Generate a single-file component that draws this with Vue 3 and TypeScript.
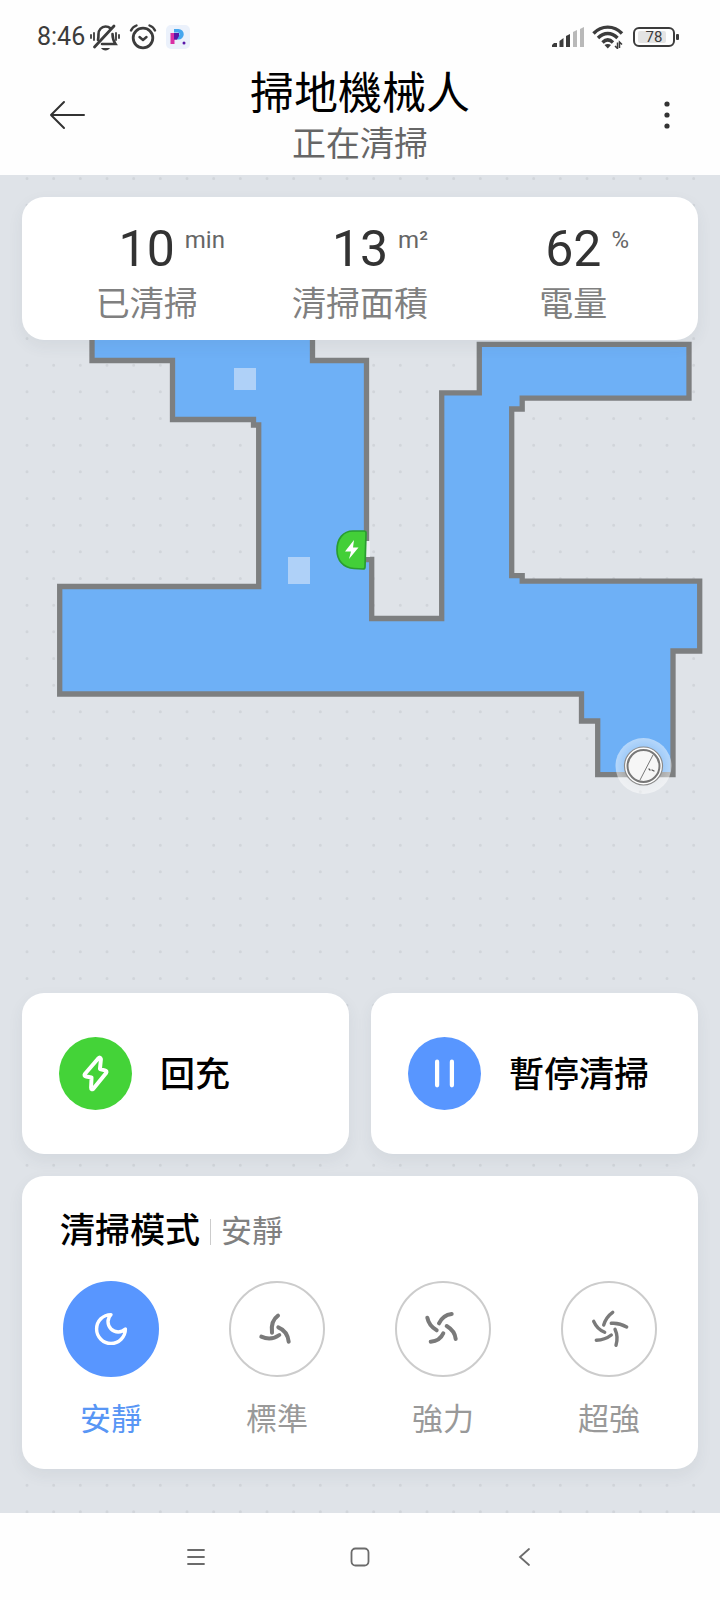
<script setup lang="ts">
import { computed, ref } from 'vue'

interface Stat {
  value: number
  unit: string
  label: string
}

interface Mode {
  id: string
  label: string
  strokes: string[]
  weight: number
}

const stats: Stat[] = [
  { value: 10, unit: 'min', label: '已清掃' },
  { value: 13, unit: 'm²', label: '清掃面積' },
  { value: 62, unit: '%', label: '電量' },
]

const modes: Mode[] = [
  {
    id: 'quiet',
    label: '安靜',
    strokes: ['M0 -14.4 A9.6 9.6 0 0 0 14.4 0 A14.4 14.4 0 1 1 0 -14.4 Z'],
    weight: 3.4,
  },
  {
    id: 'standard',
    label: '標準',
    strokes: ['M1 -13.3 Q-6.5 -8 -5 3.7', 'M1.3 -1.7 Q10.5 2 11.7 12.7', 'M-15.7 7.7 Q-6 12 2.3 6'],
    weight: 4,
  },
  {
    id: 'strong',
    label: '強力',
    strokes: [
      'M-15.7 -11.3 Q-14 -3 -6.3 1.3',
      'M8.7 -15 Q0 -14 -4 -5.7',
      'M3.7 -3 Q12 2 12.7 10',
      'M-12.3 12.7 Q-3 12 0.3 4.3',
    ],
    weight: 4,
  },
  {
    id: 'turbo',
    label: '超強',
    strokes: [
      'M3.7 -16.7 Q-3 -12 -5.3 -4',
      'M2.3 -5.7 Q10 -6.5 17.7 -2',
      'M6 0.3 Q9.5 8 7 16.3',
      'M-12.7 11.3 Q-4 11 2.3 6',
      'M-15.3 -7.7 Q-12 0 -4.3 3.3',
    ],
    weight: 3.4,
  },
]

const selected = ref('quiet')
const selectedLabel = computed(() => modes.find((m) => m.id === selected.value)?.label ?? '')

// Dotted grid behind the floor plan
const pitch = 80 / 3
const dotRows = Array.from({ length: 51 }, (_, i) => 178.5 + i * pitch)

const floor =
  'M92 320 V360.5 H172.5 V419.5 H253.5 V425 H258.7 V586.5 H59.7 V694 H581.5 V721 H597.7 V774.7 H673 V651 H699.7 V581.2 H522.2 V575.7 H511.7 V409 H522.2 V398.2 H689 V344.3 H479.3 V392.8 H441.7 V618.5 H371.7 V559.5 H366.5 V360.5 H312.5 V320 Z'
const walls =
  'M312.5 320 V360.5 H366.5 V541 M364 559.5 H371.7 V618.5 H441.7 V392.8 H479.3 V344.3 H689 V398.2 H522.2 V409 H511.7 V575.7 H522.2 V581.2 H699.7 V651 H673 V774.7 H597.7 V721 H581.5 V694 H59.7 V586.5 H258.7 V425 H253.5 V419.5 H172.5 V360.5 H92 V320'
</script>

<template>
  <div class="screen">
    <div class="status">
      <div class="status-side">
        <span class="clock">8:46</span>
        <svg class="bell" viewBox="0 0 32 28" aria-hidden="true">
          <g fill="none" stroke="#3c3c3c" stroke-width="1.800" stroke-linecap="round">
            <path d="M2 12v3M5 10v7M27 10v7M30 12v3" />
            <path d="M9 17c.5-2 .5-4 .5-6 0-4 3-7.500 7-7.500 2 0 3.500.5 4.500 1.500M23.500 11c0 4 1 7 3 10H13" stroke-width="2.600" />
            <path d="M25 3 5.500 24" stroke-width="2.800" />
          </g>
          <path d="M12 25h9c-1 1.600-2.500 2.500-4.500 2.500S13 26.600 12 25z" fill="#3c3c3c" />
        </svg>
        <svg class="alarm" viewBox="0 0 28 28" aria-hidden="true">
          <g fill="none" stroke="#3c3c3c" stroke-width="2.800" stroke-linecap="round" stroke-linejoin="round">
            <circle cx="14" cy="15" r="9.800" />
            <path d="M2 7.500C3 5 5 3.500 7.500 2.500M26 7.500C25 5 23 3.500 20.500 2.500" stroke-width="2.400" />
            <path d="m10.500 14 3.500 3 3.500-3" stroke-width="2.400" />
          </g>
        </svg>
        <svg class="app-badge" viewBox="0 0 24 24" aria-hidden="true">
          <rect width="24" height="24" rx="5" fill="#ebf1fb" />
          <path d="M8 4h4.500a5 5 0 0 1 0 10.500H8v-4h4a1.500 1.500 0 0 0 0-3H8z" fill="#45a6ee" />
          <path d="M4.500 8H11v6.500H8.500V19h-4z" fill="#d92fa4" />
          <path d="M8 8h5v3l-2 3.500H8z" fill="#5a17a8" />
          <circle cx="18" cy="18" r="1.500" fill="#5a17a8" />
        </svg>
      </div>
      <div class="status-side right">
        <svg class="signal" viewBox="0 0 32 22" aria-hidden="true">
          <path d="M0 21v-2l2-2h3v4zM7.500 21v-6l4-3v9zM14 21V10l4-2v13z" fill="#3c3c3c" />
          <path d="M21 21V6l4-2v17zM28 21V3l4-2v20z" fill="#b9b9b9" />
        </svg>
        <svg class="wifi" viewBox="0 0 32 24" aria-hidden="true">
          <g fill="none" stroke="#3c3c3c" stroke-width="3.400">
            <path d="M1.500 8.500C9.500 0 22 0 30 8.500" />
            <path d="M6 13C12 7 19.500 7 25.500 13" />
            <path d="M10.500 17.500C14 14 17.500 14 21 17.500" />
          </g>
          <path d="M12.500 20c2-1.500 4.500-1.500 6.500 0L15.800 23.500z" fill="#3c3c3c" />
          <path d="M25.500 17.500v6l-2.500-2.500M27.500 23v-6l2.500 2.500" fill="none" stroke="#3c3c3c" stroke-width="1.500" />
        </svg>
        <svg class="battery" viewBox="0 0 48 22" aria-hidden="true">
          <rect x="6" y="5" width="28" height="12" rx="2" fill="#e4e4e4" />
          <rect x="2" y="2" width="40" height="18" rx="5" fill="none" stroke="#3c3c3c" stroke-width="2" />
          <rect x="44" y="8" width="3" height="6" rx="1" fill="#3c3c3c" />
          <text x="22" y="16" text-anchor="middle" class="battery-text">78</text>
        </svg>
      </div>
    </div>

    <header class="topbar">
      <button class="icon-button" type="button" aria-label="返回">
        <svg viewBox="0 0 36 30" width="36" height="30" fill="none" stroke="#333" stroke-width="2" stroke-linecap="round" stroke-linejoin="round">
          <path d="M35 15H2M15 2 2 15l13 13" />
        </svg>
      </button>
      <div class="heading">
        <h1>掃地機械人</h1>
        <p>正在清掃</p>
      </div>
      <button class="icon-button more" type="button" aria-label="更多">
        <svg viewBox="0 0 8 30" width="8" height="30" fill="#333">
          <circle cx="4" cy="4" r="2.600" /><circle cx="4" cy="15" r="2.600" /><circle cx="4" cy="26" r="2.600" />
        </svg>
      </button>
    </header>

    <main class="stage">
      <svg class="map" viewBox="0 175 720 1338" preserveAspectRatio="xMidYMin slice" role="img" aria-label="清掃地圖">
        <defs>
          <radialGradient id="halo">
            <stop offset="0.6" stop-color="#fff" stop-opacity="0.3" />
            <stop offset="1" stop-color="#fff" stop-opacity="0.5" />
          </radialGradient>
        </defs>
        <g stroke="#d1d5da" stroke-width="3" stroke-linecap="round">
          <line v-for="y in dotRows" :key="y" x1="27" :y1="y" x2="694" :y2="y" :stroke-dasharray="`0 ${pitch}`" />
        </g>
        <path :d="floor" fill="#6eb0f6" />
        <path :d="walls" fill="none" stroke="#7d7f80" stroke-width="5.300" />
        <rect x="234" y="368" width="22" height="22" fill="#afd1f8" />
        <rect x="288" y="557" width="22" height="27" fill="#afd1f8" />
        <rect x="365" y="541" width="5" height="16" fill="#eceef1" />
        <path d="M353 531H364q2 0 2 2L365 567q0 2-2 2L354 568.500C343 568 337 560 337 550 337 539 343 531 353 531Z" fill="#43cf38" stroke="#2a9d30" stroke-width="1.700" />
        <path d="M354 540 345 551.500h6L349 559 358.500 547.500H353Z" fill="#fff" />
        <circle cx="643.500" cy="766" r="28" fill="url(#halo)" />
        <circle cx="643.500" cy="766" r="19" fill="#fff" stroke="#8b8b8b" stroke-width="1.200" />
        <circle cx="643.500" cy="766" r="16" fill="#f6f6f6" stroke="#777" stroke-width="2" />
        <path d="M653 755 640 780" stroke="#777" stroke-width="1" />
        <path d="m649 769 1 1M652 770l2 1" stroke="#555" stroke-width="1.200" stroke-linecap="round" />
      </svg>

      <section class="card stats">
        <div v-for="s in stats" :key="s.label" class="stat">
          <div class="reading">
            <span class="value">{{ s.value }}</span>
            <span class="unit">{{ s.unit }}</span>
          </div>
          <span class="stat-label">{{ s.label }}</span>
        </div>
      </section>

      <div class="actions">
        <button class="card action" type="button">
          <svg class="disc" viewBox="-37 -37 74 74" aria-hidden="true">
            <circle r="37" fill="#44d338" />
            <path d="M2.500 -15 -10.800 .5Q-12 2.500 -9.500 3L-4 4 -4.500 14.500Q-4.500 17 -2.200 15.500L10.800 -.5Q12 -2.500 9.500 -3.200L4.500 -4.500 5.500 -14.500Q5 -17.500 2.500 -15Z" fill="none" stroke="#fff" stroke-width="4" stroke-linejoin="round" />
          </svg>
          <span class="action-label">回充</span>
        </button>
        <button class="card action" type="button">
          <svg class="disc" viewBox="-37 -37 74 74" aria-hidden="true">
            <circle r="37" fill="#5896ff" />
            <path d="M-7.500 -12V12M7.500 -12V12" stroke="#fff" stroke-width="4.300" stroke-linecap="round" />
          </svg>
          <span class="action-label">暫停清掃</span>
        </button>
      </div>

      <section class="card modes">
        <div class="modes-head">
          <h2 id="mode-title">清掃模式</h2>
          <span class="current">{{ selectedLabel }}</span>
        </div>
        <div class="mode-list" role="radiogroup" aria-labelledby="mode-title">
          <label v-for="m in modes" :key="m.id" class="mode" :class="{ active: selected === m.id }">
            <input v-model="selected" type="radio" name="mode" :value="m.id" />
            <span class="ring">
              <svg viewBox="-24 -24 48 48" width="48" height="48" fill="none" stroke="currentColor" stroke-linecap="round" stroke-linejoin="round" :stroke-width="m.weight" aria-hidden="true">
                <path v-for="d in m.strokes" :key="d" :d="d" />
              </svg>
            </span>
            <span>{{ m.label }}</span>
          </label>
        </div>
      </section>
    </main>

    <nav class="navbar" aria-label="系統導覽">
      <button type="button" aria-label="最近">
        <svg viewBox="0 0 20 20" width="20" height="20" fill="none" stroke="#6b6b6b" stroke-width="1.800" stroke-linecap="round"><path d="M2 3h16M2 10h16M2 17h16" /></svg>
      </button>
      <button type="button" aria-label="主頁">
        <svg viewBox="0 0 20 20" width="20" height="20" fill="none" stroke="#6b6b6b" stroke-width="1.800"><rect x="1.500" y="1.500" width="17" height="17" rx="4" /></svg>
      </button>
      <button type="button" aria-label="返回">
        <svg viewBox="0 0 20 20" width="20" height="20" fill="none" stroke="#6b6b6b" stroke-width="1.800" stroke-linecap="round"><path d="M15 2 6 10l9 8" /></svg>
      </button>
    </nav>
  </div>
</template>

<style>
body {
  background: #fff;
}
</style>

<style scoped>
.screen {
  display: flex;
  flex-direction: column;
  min-height: 100vh;
  background: #fefefe;
  font-family: Roboto, "Noto Sans CJK TC", sans-serif;
  color: #000;
}

h1,
h2,
p {
  margin: 0;
  font-weight: 400;
}

button {
  padding: 0;
  border: 0;
  background: none;
  font: inherit;
  color: inherit;
  cursor: pointer;
}

svg {
  display: block;
  flex: none;
}

.status {
  display: flex;
  justify-content: space-between;
  align-items: center;
  height: 60px;
  padding: 7px 40px 0 37px;
}

.status-side {
  display: flex;
  align-items: center;
}

.status-side.right {
  gap: 8px;
}

.clock {
  font-size: 25px;
  line-height: 28px;
  color: #3c3c3c;
}

.bell {
  width: 32px;
  height: 28px;
  margin-left: 4px;
}

.alarm {
  width: 28px;
  height: 28px;
  margin-left: 8px;
}

.app-badge {
  width: 24px;
  height: 24px;
  margin-left: 9px;
}

.signal {
  width: 32px;
  height: 22px;
}

.wifi {
  width: 32px;
  height: 24px;
}

.battery {
  width: 48px;
  height: 22px;
}

.battery-text {
  font-size: 15px;
  fill: #3c3c3c;
}

.topbar {
  display: flex;
  justify-content: space-between;
  align-items: flex-start;
  padding: 0 49px 8px;
}

.icon-button {
  display: flex;
  width: 36px;
  height: 96px;
  align-items: center;
}

.more {
  justify-content: flex-end;
}

.heading {
  flex: 1;
  text-align: center;
}

h1 {
  font-size: 44px;
  line-height: 54px;
}

.heading p {
  font-size: 34px;
  line-height: 46px;
  color: #666;
}

.stage {
  position: relative;
  display: flex;
  flex: 1;
  flex-direction: column;
  padding: 22px 22px 44px;
  background: #dfe3e8;
  overflow: hidden;
}

.map {
  position: absolute;
  inset: 0;
  width: 100%;
  height: 100%;
}

.card {
  position: relative;
  border-radius: 22px;
  background: #fff;
  box-shadow: 0 6px 16px rgba(60, 70, 90, 0.07);
}

.stats {
  display: grid;
  grid-template-columns: repeat(3, 1fr);
  padding: 22px 18px 10px;
}

.stat {
  text-align: center;
}

.reading {
  display: grid;
  grid-template-columns: 1fr auto 1fr;
  column-gap: 10px;
}

.value {
  grid-column: 2;
  font-size: 50px;
  line-height: 60px;
  color: #333;
}

.unit {
  font-size: 24px;
  line-height: 42px;
  text-align: left;
  color: #666;
}

.stat-label {
  display: block;
  font-size: 34px;
  line-height: 51px;
  color: #808080;
}

.actions {
  display: grid;
  grid-template-columns: 1fr 1fr;
  gap: 22px;
  margin-top: auto;
}

.action {
  display: flex;
  align-items: center;
  gap: 28px;
  padding: 44px 37px;
  font-size: 35px;
  font-weight: 500;
}

.action-label {
  padding-bottom: 4px;
}

.disc {
  width: 73px;
  height: 73px;
}

.modes {
  margin-top: 22px;
  padding: 31px 6px 27px;
}

.modes-head {
  display: flex;
  align-items: center;
  padding: 0 32px;
}

h2 {
  font-size: 35px;
  line-height: 50px;
  font-weight: 500;
}

.current {
  display: flex;
  align-items: center;
  font-size: 31px;
  line-height: 50px;
  color: #808080;
}

.current::before {
  content: "";
  width: 1px;
  height: 26px;
  margin: 0 10px;
  background: #ccc;
}

.mode-list {
  display: grid;
  grid-template-columns: repeat(4, 1fr);
  margin-top: 24px;
}

.mode {
  position: relative;
  display: flex;
  flex-direction: column;
  align-items: center;
  gap: 21px;
  font-size: 31px;
  line-height: 44px;
  color: #999;
  cursor: pointer;
}

.mode input {
  position: absolute;
  opacity: 0;
}

.ring {
  display: flex;
  align-items: center;
  justify-content: center;
  box-sizing: border-box;
  width: 96px;
  height: 96px;
  border: 2px solid #ccc;
  border-radius: 50%;
  color: #7a7a7a;
}

.active {
  color: #5896f5;
}

.active .ring {
  border-color: #5896ff;
  background: #5896ff;
  color: #fff;
}

.navbar {
  display: flex;
  justify-content: center;
  height: 87px;
}

.navbar button {
  display: flex;
  flex: 0 1 164px;
  align-items: center;
  justify-content: center;
}
</style>
